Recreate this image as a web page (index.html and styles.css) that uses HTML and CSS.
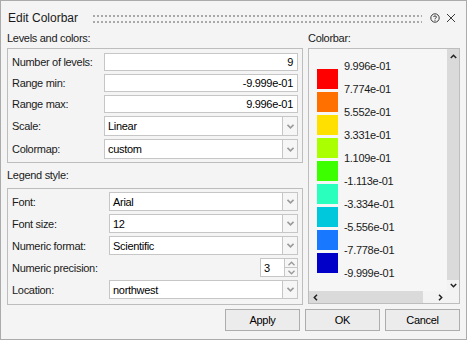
FILE: index.html
```html
<!DOCTYPE html>
<html>
<head>
<meta charset="utf-8">
<link rel="stylesheet" href="styles.css">
</head>
<body>
<div class="window">
  <div class="titlebar">
    <span class="title">Edit Colorbar</span>
    <div class="grip"></div>
    <svg class="help" width="10" height="10" viewBox="0 0 10 10"><circle cx="5" cy="5" r="4.2" fill="none" stroke="#3a3a3a" stroke-width="1"/><path d="M3.5 4 C3.5 2.6 6.5 2.6 6.5 4 C6.5 5 5 5 5 6.1" fill="none" stroke="#3a3a3a" stroke-width="1"/><rect x="4.5" y="6.8" width="1" height="1" fill="#3a3a3a"/></svg>
    <svg class="close" width="10" height="10" viewBox="0 0 10 10"><path d="M1 1 L9 9 M9 1 L1 9" stroke="#3a3a3a" stroke-width="1"/></svg>
  </div>
  <div class="main">
    <div class="col-left">
      <div class="section">Levels and colors:</div>
      <div class="group g1">
        <div class="row"><span class="lbl">Number of levels:</span><div class="field num">9</div></div>
        <div class="row"><span class="lbl">Range min:</span><div class="field num">-9.999e-01</div></div>
        <div class="row"><span class="lbl">Range max:</span><div class="field num">9.996e-01</div></div>
        <div class="row tall"><span class="lbl">Scale:</span><div class="select"><div class="sel-text">Linear</div><div class="sel-btn"><svg width="7" height="5" viewBox="0 0 7 5"><path d="M0.5 0.8 L3.5 3.8 L6.5 0.8" fill="none" stroke="#9a9a9a" stroke-width="1.6"/></svg></div></div></div>
        <div class="row tall"><span class="lbl">Colormap:</span><div class="select"><div class="sel-text">custom</div><div class="sel-btn"><svg width="7" height="5" viewBox="0 0 7 5"><path d="M0.5 0.8 L3.5 3.8 L6.5 0.8" fill="none" stroke="#9a9a9a" stroke-width="1.6"/></svg></div></div></div>
      </div>
      <div class="section s2">Legend style:</div>
      <div class="group g2">
        <div class="row"><span class="lbl">Font:</span><div class="select"><div class="sel-text">Arial</div><div class="sel-btn"><svg width="7" height="5" viewBox="0 0 7 5"><path d="M0.5 0.8 L3.5 3.8 L6.5 0.8" fill="none" stroke="#9a9a9a" stroke-width="1.6"/></svg></div></div></div>
        <div class="row"><span class="lbl">Font size:</span><div class="select"><div class="sel-text">12</div><div class="sel-btn"><svg width="7" height="5" viewBox="0 0 7 5"><path d="M0.5 0.8 L3.5 3.8 L6.5 0.8" fill="none" stroke="#9a9a9a" stroke-width="1.6"/></svg></div></div></div>
        <div class="row"><span class="lbl">Numeric format:</span><div class="select"><div class="sel-text">Scientific</div><div class="sel-btn"><svg width="7" height="5" viewBox="0 0 7 5"><path d="M0.5 0.8 L3.5 3.8 L6.5 0.8" fill="none" stroke="#9a9a9a" stroke-width="1.6"/></svg></div></div></div>
        <div class="row"><span class="lbl wide">Numeric precision:</span><div class="spin"><div class="spin-field">3</div><div class="spin-btns"><div class="sb"><svg width="7" height="5" viewBox="0 0 7 5"><path d="M0.5 4.2 L3.5 1.2 L6.5 4.2" fill="none" stroke="#9a9a9a" stroke-width="1.4"/></svg></div><div class="sb"><svg width="7" height="5" viewBox="0 0 7 5"><path d="M0.5 0.8 L3.5 3.8 L6.5 0.8" fill="none" stroke="#9a9a9a" stroke-width="1.4"/></svg></div></div></div></div>
        <div class="row"><span class="lbl">Location:</span><div class="select"><div class="sel-text">northwest</div><div class="sel-btn"><svg width="7" height="5" viewBox="0 0 7 5"><path d="M0.5 0.8 L3.5 3.8 L6.5 0.8" fill="none" stroke="#9a9a9a" stroke-width="1.6"/></svg></div></div></div>
      </div>
    </div>
    <div class="col-right">
      <div class="section">Colorbar:</div>
      <div class="panel">
        <div class="viewport">
          <div class="swatches">
            <div class="sw" style="background:#ff0000"></div>
            <div class="sw" style="background:#ff7000"></div>
            <div class="sw" style="background:#ffe000"></div>
            <div class="sw" style="background:#aaff00"></div>
            <div class="sw" style="background:#3cff00"></div>
            <div class="sw" style="background:#2affbe"></div>
            <div class="sw" style="background:#00c8dc"></div>
            <div class="sw" style="background:#1878ff"></div>
            <div class="sw" style="background:#0000c8"></div>
          </div>
          <div class="ticks">
            <div>9.996e-01</div>
            <div>7.774e-01</div>
            <div>5.552e-01</div>
            <div>3.331e-01</div>
            <div>1.109e-01</div>
            <div>-1.113e-01</div>
            <div>-3.334e-01</div>
            <div>-5.556e-01</div>
            <div>-7.778e-01</div>
            <div>-9.999e-01</div>
          </div>
        </div>
        <div class="vscroll">
          <div class="vthumb"><svg width="7" height="5" viewBox="0 0 7 5"><path d="M0.8 4 L3.5 1.3 L6.2 4" fill="none" stroke="#222" stroke-width="1.5"/></svg></div>
          <div class="vdown"><svg width="7" height="5" viewBox="0 0 7 5"><path d="M0.8 1 L3.5 3.7 L6.2 1" fill="none" stroke="#222" stroke-width="1.5"/></svg></div>
        </div>
        <div class="hscroll">
          <div class="hthumb"><svg width="5" height="7" viewBox="0 0 5 7"><path d="M4 0.8 L1.3 3.5 L4 6.2" fill="none" stroke="#222" stroke-width="1.5"/></svg></div>
          <div class="hright"><svg width="5" height="7" viewBox="0 0 5 7"><path d="M1 0.8 L3.7 3.5 L1 6.2" fill="none" stroke="#222" stroke-width="1.5"/></svg></div>
        </div>
        <div class="corner"></div>
      </div>
    </div>
  </div>
  <div class="buttons">
    <button class="btn">Apply</button>
    <button class="btn">OK</button>
    <button class="btn">Cancel</button>
  </div>
</div>
</body>
</html>
```

FILE: styles.css
```css
* { box-sizing: border-box; }
body {
  margin: 0;
  font-family: "Liberation Sans", Arial, sans-serif;
  font-size: 11px;
  letter-spacing: -0.3px;
  color: #000;
}
.window {
  width: 467px;
  height: 340px;
  border: 1px solid #ababab;
  background: #f4f4f4;
  display: flex;
  flex-direction: column;
}
.titlebar {
  height: 29px;
  flex: none;
  display: flex;
  align-items: center;
  padding: 4px 0 0 7px;
}
.title {
  font-size: 12px;
  letter-spacing: 0;
  color: #1a1a1a;
}
.grip {
  margin-left: 15px;
  margin-top: 3px;
  width: 329px;
  height: 8px;
  background-image: radial-gradient(circle at 1px 1px, #a9a9a9 0.8px, transparent 1.2px);
  background-size: 4px 6px;
}
.help { margin-left: 8px; }
.close { margin-left: 6px; }
.main {
  flex: none;
  display: grid;
  grid-template-columns: 296px 152px;
  column-gap: 5px;
  padding-left: 6px;
}
.col-left, .col-right {
  display: flex;
  flex-direction: column;
}
.section {
  height: 18px;
  line-height: 16px;
  color: #1a1a1a;
}
.section.s2 {
  height: 25px;
  line-height: 25px;
}
.group {
  border: 1px solid #bdbdbd;
  padding: 4px 4px 3px 4px;
  display: flex;
  flex-direction: column;
  gap: 3px;
}
.g2 {
  padding: 3px 4px 5px 4px;
}
.row {
  display: flex;
  align-items: center;
  height: 18px;
}
.row.tall { height: 20px; }
.g2 .row { height: 19px; }
.lbl {
  width: 92px;
  flex: none;
  color: #1a1a1a;
}
.g2 .lbl { width: 97px; }
.g2 .lbl.wide { width: auto; flex: 1; }
.field {
  flex: 1;
  height: 100%;
  background: #fff;
  border: 1px solid #c6c6c6;
  display: flex;
  align-items: center;
  padding: 0 4px;
}
.field.num { justify-content: flex-end; }
.select {
  flex: 1;
  height: 100%;
  display: flex;
}
.sel-text {
  flex: 1;
  background: #fff;
  border: 1px solid #c6c6c6;
  display: flex;
  align-items: center;
  padding: 0 3px;
}
.sel-btn {
  width: 15px;
  flex: none;
  border: 1px solid #c6c6c6;
  border-left: none;
  background: #f6f6f6;
  display: flex;
  align-items: center;
  justify-content: center;
}
.spin {
  display: flex;
  height: 100%;
}
.spin-field {
  width: 25px;
  background: #fff;
  border: 1px solid #c6c6c6;
  display: flex;
  align-items: center;
  padding-left: 3px;
}
.spin-btns {
  width: 13px;
  display: flex;
  flex-direction: column;
}
.sb {
  flex: 1;
  border: 1px solid #c6c6c6;
  border-left: none;
  background: #f6f6f6;
  display: flex;
  align-items: center;
  justify-content: center;
}
.sb + .sb { border-top: none; }
.panel {
  flex: 1;
  margin-bottom: 1px;
  border: 1px solid #bdbdbd;
  background: #f6f6f6;
  display: grid;
  grid-template-columns: 1fr 12px;
  grid-template-rows: 1fr 12px;
}
.viewport {
  display: flex;
  overflow: hidden;
}
.swatches {
  margin-left: 8px;
  padding-top: 20px;
  display: flex;
  flex-direction: column;
  gap: 3px;
}
.sw {
  width: 21px;
  height: 20px;
}
.ticks {
  margin-left: 6px;
  padding-top: 6px;
  line-height: 23px;
  color: #1a1a1a;
}
.vscroll {
  display: flex;
  flex-direction: column;
  background: #f3f3f3;
}
.vthumb {
  height: 231px;
  background: #dadada;
  display: flex;
  justify-content: center;
  padding-top: 5px;
}
.vdown {
  flex: 1;
  display: flex;
  align-items: center;
  justify-content: center;
}
.hscroll {
  display: flex;
  background: #f3f3f3;
}
.hthumb {
  width: 114px;
  background: #dadada;
  display: flex;
  align-items: center;
  padding-left: 4px;
}
.hright {
  flex: 1;
  display: flex;
  align-items: center;
  justify-content: flex-end;
  padding-right: 4px;
}
.corner { background: #f3f3f3; }
.buttons {
  flex: none;
  display: flex;
  justify-content: flex-end;
  gap: 5px;
  padding: 4px 6px 0 0;
}
.btn {
  width: 75px;
  height: 22px;
  border: 1px solid #adadad;
  background: #ececec;
  font-family: "Liberation Sans", Arial, sans-serif;
  font-size: 11px;
  letter-spacing: -0.3px;
  color: #000;
  padding: 0;
}
```
